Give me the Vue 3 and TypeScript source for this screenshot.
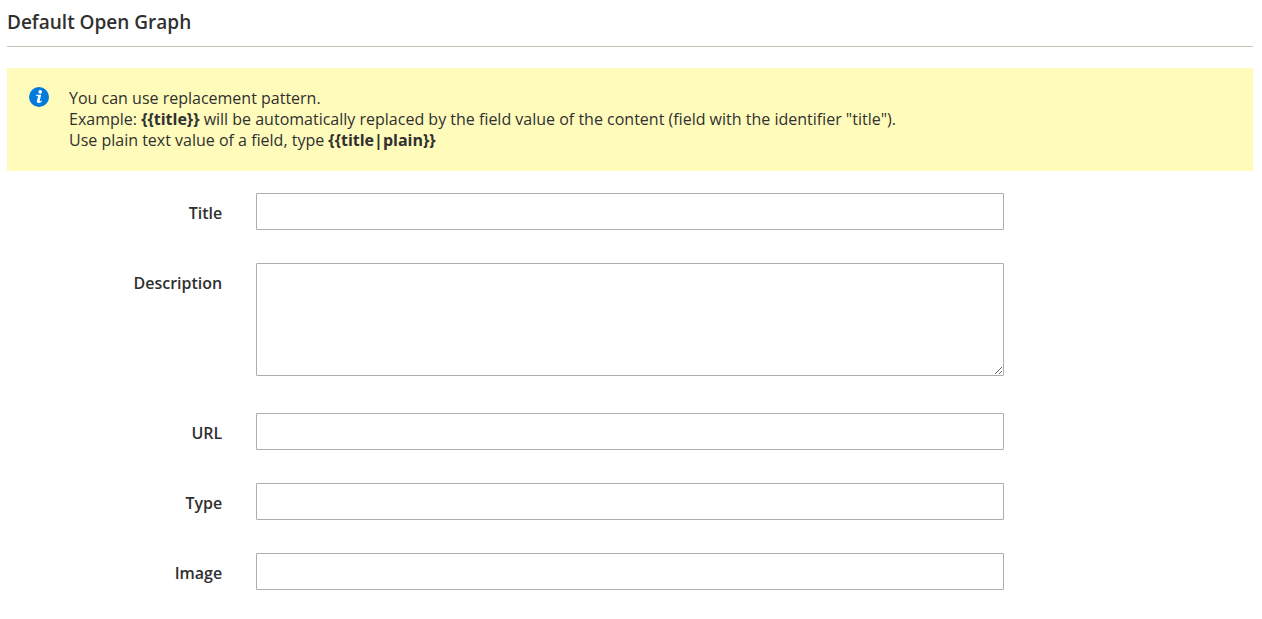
<script setup lang="ts">
interface Field {
  id: string
  label: string
  multiline?: boolean
}

const fields: Field[] = [
  { id: 'og-title', label: 'Title' },
  { id: 'og-description', label: 'Description', multiline: true },
  { id: 'og-url', label: 'URL' },
  { id: 'og-type', label: 'Type' },
  { id: 'og-image', label: 'Image' },
]
</script>

<template>
  <form class="section" @submit.prevent>
    <h2 class="heading">Default Open Graph</h2>
    <div class="notice">
      <svg class="icon" viewBox="0 0 20 20" aria-hidden="true">
        <circle cx="10" cy="10" r="10" fill="#007bdb" />
        <circle cx="11.2" cy="4.9" r="1.8" fill="#fff" />
        <path d="M7 7.8h5.2l-1.5 5.9c-.1.7.5.7 2-.2l.3.7c-1.8 2-5.7 2.7-5.1-.1l1.1-4.6c.1-.6-.2-.8-2-.8z" fill="#fff" />
      </svg>
      <p class="message">
        You can use replacement pattern.<br />
        Example: <strong v-pre>{{title}}</strong> will be automatically replaced by the field value of the content (field with the identifier "title").<br />
        Use plain text value of a field, type <strong v-pre>{{title|plain}}</strong>
      </p>
    </div>
    <div class="fields">
      <div v-for="field in fields" :key="field.id" class="row">
        <label class="label" :for="field.id">{{ field.label }}</label>
        <textarea v-if="field.multiline" :id="field.id" class="control area"></textarea>
        <input v-else :id="field.id" class="control" type="text" />
      </div>
    </div>
  </form>
</template>

<style>
body {
  background: #fff;
}
</style>

<style scoped>
.section {
  padding: 8px 9px 29px 7px;
  color: #303030;
  font-family: "Open Sans", "Noto Sans", sans-serif;
  font-size: 16px;
}
.heading {
  margin: 0 0 21px;
  padding-bottom: 9px;
  border-bottom: 1px solid #cac3b4;
  font-size: 19px;
  font-weight: 600;
  line-height: 29px;
}
.notice {
  display: flex;
  gap: 20px;
  margin-bottom: 22px;
  padding: 19px 22px 20px;
  background: #fffbbb;
}
.icon {
  flex: none;
  width: 20px;
  height: 20px;
}
.message {
  margin: 0;
  padding-top: 1px;
  line-height: 21px;
}
.message strong {
  font-weight: 700;
}
.fields {
  display: grid;
  gap: 33px;
}
.row {
  display: grid;
  grid-template-columns: 20% 60%;
  align-items: start;
}
.label {
  padding: 9px 34px 0 0;
  font-weight: 600;
  line-height: 22px;
  text-align: right;
}
.control {
  box-sizing: border-box;
  width: 100%;
  height: 37px;
  margin: 0;
  padding: 6px 10px;
  border: 1px solid #adadad;
  border-radius: 1px;
  background: #fff;
  color: #303030;
  font: inherit;
}
.area {
  height: 113px;
  margin-bottom: 4px;
  resize: vertical;
}
</style>
